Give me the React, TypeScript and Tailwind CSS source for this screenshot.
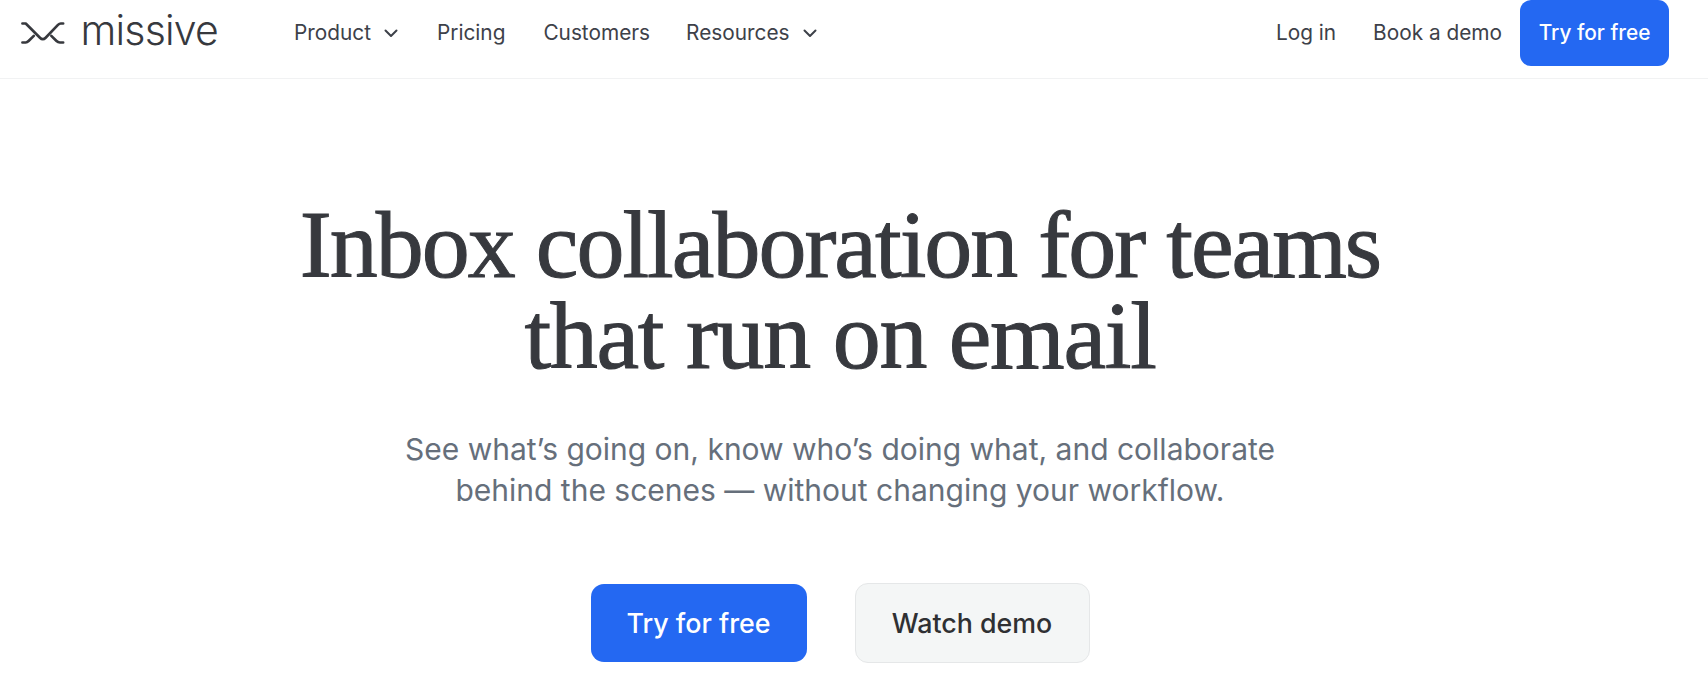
import React from "react";

const Chevron = () => (
  <svg width="16" height="16" viewBox="0 0 16 16" fill="none" stroke="currentColor" strokeWidth="2" strokeLinecap="round" strokeLinejoin="round" className="ml-[12px]">
    <path d="M2.5 5.5 L8 11 L13.5 5.5" />
  </svg>
);

const Logo = () => (
  <svg width="47" height="24" viewBox="0 0 46 24" fill="none" stroke="#37393e" strokeWidth="2.8" strokeLinecap="round" strokeLinejoin="round">
    <path d="M1.5 2 H5 L20 17 Q23 20 26 17 L39 3.5 Q40.5 2 42 2 H44.5" />
    <path d="M1.5 22 H5 Q6.5 22 8 20.5 L13.5 15" />
    <path d="M32 15 L37.5 20.5 Q39 22 41 22 H44.5" />
  </svg>
);

export default function App() {
  return (
    <div className="h-[691px] overflow-hidden bg-white font-['Inter',sans-serif] text-[#37393e]">
      <header className="flex h-[79px] items-start border-b border-[#f1f2f3] pl-[21px] pr-[39px]">
        <div className="flex h-[65px] w-[197px] items-center">
          <Logo />
          <span className="ml-[16px] text-[41px] leading-none font-light tracking-[-0.8px] -translate-y-[2px]">missive</span>
        </div>
        <nav className="ml-[76px] flex h-[65px] items-center text-[20.8px] text-[#3d4149]">
          <a className="mr-[38px] flex items-center">Product<Chevron /></a>
          <a className="mr-[38px]">Pricing</a>
          <a className="mr-[36px]">Customers</a>
          <a className="flex items-center">Resources<Chevron /></a>
        </nav>
        <div className="ml-auto flex h-[65px] items-center text-[20.8px] text-[#3d4149]">
          <a className="mr-[37px]">Log in</a>
          <a className="mr-[18px]">Book a demo</a>
          <a className="flex h-[66px] w-[149px] items-center justify-center rounded-[11px] bg-[#2468f2] font-medium text-white">Try for free</a>
        </div>
      </header>
      <main className="flex flex-col items-center pr-[28px]">
        <h1 className="mt-[120px] text-center font-['Liberation_Serif',serif] text-[96px] leading-[91px] tracking-[-2px] text-[#37393e] [-webkit-text-stroke:1px_#37393e]">
          Inbox collaboration for teams<br /><span className="tracking-[-1.3px]">that run on email</span>
        </h1>
        <p className="mt-[48px] text-center text-[30px] leading-[41px] text-[#666f7b]">
          See what’s going on, know who’s doing what, and collaborate<br />behind the scenes — without changing your workflow.
        </p>
        <div className="mt-[72px] flex items-center gap-[48px]">
          <a className="flex h-[78px] w-[216px] items-center justify-center rounded-[13px] bg-[#2468f2] text-[26.8px] font-medium text-white">Try for free</a>
          <a className="flex h-[80px] w-[235px] items-center justify-center rounded-[13px] border border-[#e5e7e8] bg-[#f4f6f6] text-[26.8px] font-medium text-[#2f3033]">Watch demo</a>
        </div>
      </main>
    </div>
  );
}
